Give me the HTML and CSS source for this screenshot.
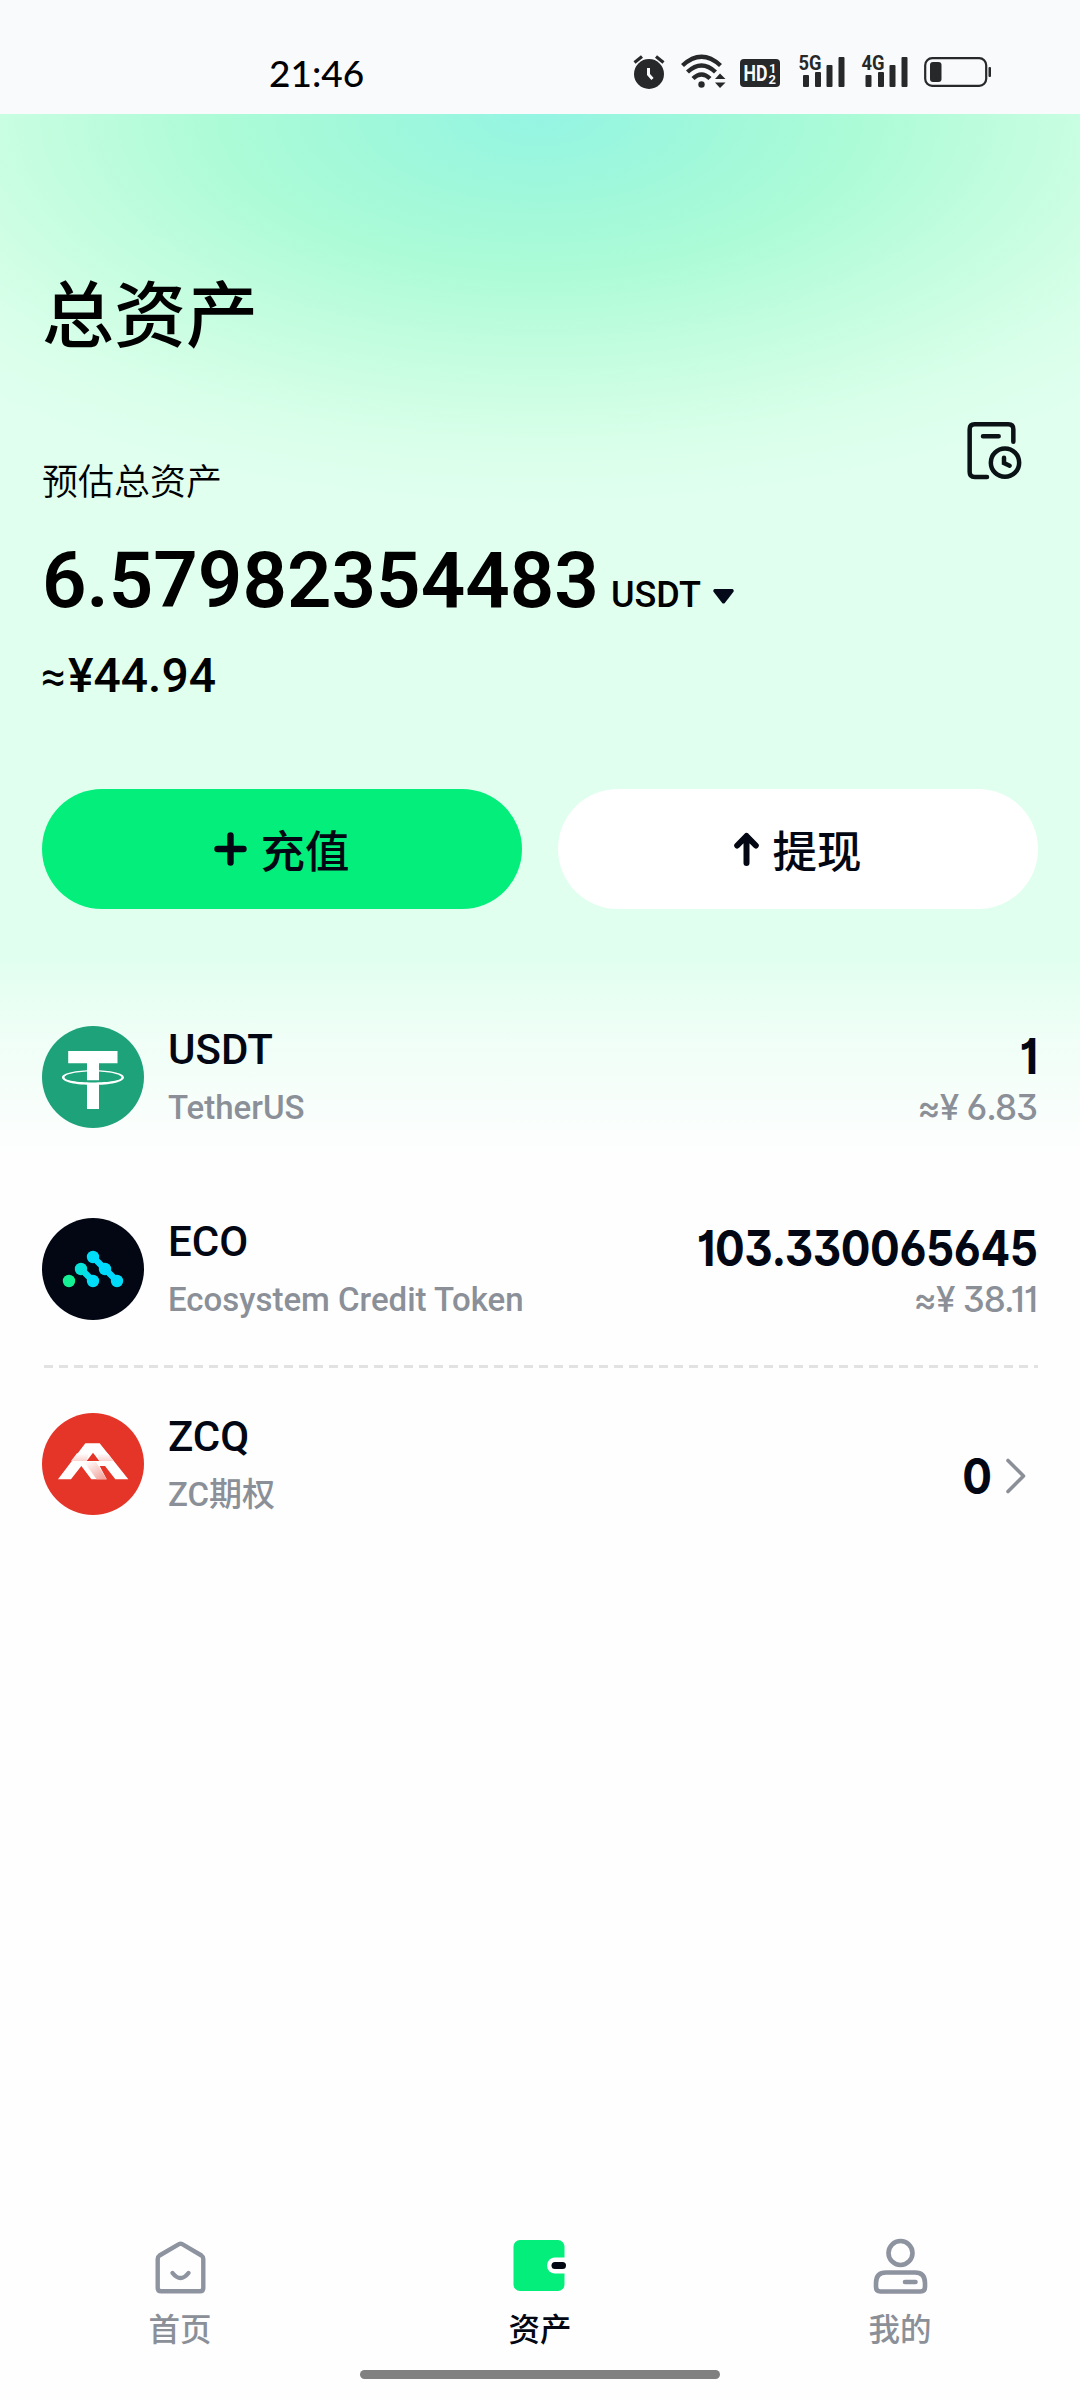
FILE: index.html
```html
<!DOCTYPE html>
<html lang="zh-CN">
<head>
<meta charset="utf-8">
<title>总资产</title>
<link rel="stylesheet" href="styles.css">
</head>
<body>
<div class="screen">
  <header class="status">
    <span class="clock">21:46</span>
    <svg class="status-icons" width="372" height="40" viewBox="630 52 372 40" fill="#262829">
      <!-- alarm -->
      <circle cx="649" cy="74" r="15"/>
      <path d="M634.500 62.500L642 56.500M663.500 62.500L656 56.500" stroke="#262829" stroke-width="3.200"/>
      <path d="M648.500 68V74.500L652.500 79" stroke="#f9fafc" stroke-width="3" fill="none"/>
      <!-- wifi -->
      <g fill="none" stroke="#262829" stroke-width="4.400">
        <path d="M682.500 65.500Q701.500 48 720.500 65.500"/>
        <path d="M687.500 72Q701.500 59 715.500 72"/>
        <path d="M693 78.500Q701.500 70.500 710 78.500"/>
      </g>
      <circle cx="701.500" cy="84.500" r="3.200"/>
      <path d="M715 79L720 73.500L725.500 79ZM715 82.500L720 88L725.500 82.500Z"/>
      <!-- hd -->
      <rect x="740" y="59" width="40" height="28" rx="4"/>
      <text class="hd" x="743.500" y="81" textLength="24" lengthAdjust="spacingAndGlyphs">HD</text>
      <text class="hd-sub" x="769" y="73">1</text>
      <text class="hd-sub" x="768.500" y="83.500">2</text>
      <!-- 5G signal -->
      <text class="net" x="798.500" y="70" textLength="23" lengthAdjust="spacingAndGlyphs">5G</text>
      <rect x="803" y="75" width="6" height="12" rx="1"/><rect x="815" y="72" width="6" height="15" rx="1"/><rect x="826.500" y="65" width="6" height="22" rx="1"/><rect x="838.500" y="57" width="6" height="30" rx="1"/>
      <!-- 4G signal -->
      <text class="net" x="861.500" y="70" textLength="23" lengthAdjust="spacingAndGlyphs">4G</text>
      <rect x="865.500" y="75" width="6" height="12" rx="1"/><rect x="878" y="72" width="6" height="15" rx="1"/><rect x="889.500" y="65" width="6" height="22" rx="1"/><rect x="901.500" y="57" width="6" height="30" rx="1"/>
      <!-- battery -->
      <rect x="925.200" y="58.200" width="61" height="27.600" rx="7" fill="none" stroke="#262829" stroke-width="2.200"/>
      <rect x="930" y="62" width="11.500" height="20" rx="3"/>
      <rect x="988.500" y="67" width="2.500" height="10" rx="1"/>
    </svg>
  </header>

  <main class="content">
    <h1 class="title">总资产</h1>
    <div class="summary">
      <span class="summary-label">预估总资产</span>
      <svg class="history" width="55" height="58" viewBox="81 65 165 174" fill="none" stroke="#0a1216" stroke-width="13.500" stroke-linecap="round">
        <path d="M141 230H104Q89 230 89 215V87Q89 72 104 72H205Q220 72 220 87V124M129 108H176"/>
        <circle cx="195" cy="187" r="42.500"/>
        <path d="M192 172V188L209 196"/>
      </svg>
    </div>
    <div class="amount">
      <span class="amount-value">6.57982354483</span>
      <span class="amount-unit">USDT</span>
      <svg class="caret" width="21" height="15" viewBox="0 0 21 15"><path d="M1.500 0H19.500Q21.500 1 20.300 3L11.800 14Q10.500 15.200 9.200 14L.7 3Q-.5 1 1.500 0Z" fill="#04091a"/></svg>
    </div>
    <div class="fiat"><span class="approx">≈</span>¥44.94</div>

    <div class="actions">
      <button class="btn btn-primary">
        <svg width="33" height="34" viewBox="0 0 33 34" stroke="#020713" stroke-width="6.400" stroke-linecap="round"><path d="M3.500 17H29.500M16.500 3.500V30.500"/></svg>
        充值
      </button>
      <button class="btn btn-light">
        <svg width="25" height="34" viewBox="0 0 25 34" fill="none" stroke="#020713" stroke-width="6" stroke-linecap="round" stroke-linejoin="round"><path d="M12.500 31V5M3.200 13.500L12.500 4L21.800 13.500"/></svg>
        提现
      </button>
    </div>

    <section class="assets">
      <article class="asset">
        <svg class="coin" viewBox="0 0 102 102">
          <circle cx="51" cy="51" r="51" fill="#1da27a"/>
          <path fill="#fff" d="M26.200 25H75.500V37.300H57V54.300H45V37.300H26.200ZM45 57.500H57V83H45Z"/>
          <path fill="#fff" fill-rule="evenodd" d="M20 51.500C20 47 34 44.300 51 44.300S82 47 82 51.500S68 59 51 59S20 56 20 51.500ZM22.500 51.300C22.500 54.500 35 56.500 51 56.500S79.500 54.500 79.500 51.300S67 45.400 51 45.400S22.500 48 22.500 51.300Z"/>
        </svg>
        <div class="names"><div class="symbol">USDT</div><div class="fullname">TetherUS</div></div>
        <div class="figures"><div class="balance">1</div><div class="worth">≈¥ 6.83</div></div>
      </article>
      <article class="asset">
        <svg class="coin" viewBox="0 0 102 102">
          <defs><linearGradient id="eco" x1="27" y1="0" x2="75" y2="0" gradientUnits="userSpaceOnUse"><stop offset="0" stop-color="#14f195"/><stop offset=".12" stop-color="#14f195"/><stop offset=".2" stop-color="#08e4d0"/><stop offset=".5" stop-color="#00dcff"/><stop offset="1" stop-color="#00d8ff"/></linearGradient></defs>
          <circle cx="51" cy="51" r="51" fill="#020713"/>
          <g fill="url(#eco)">
            <circle cx="27" cy="63" r="6.200"/>
          </g>
          <g fill="#00dcf8">
            <circle cx="39" cy="51" r="6.200" fill="#08e2d8"/><circle cx="51" cy="63" r="6.200"/><circle cx="51" cy="39" r="6.200"/><circle cx="63" cy="51" r="6.200"/><circle cx="75" cy="63" r="6.200"/>
          </g>
          <path d="M39 51L51 63M51 39L75 63" stroke="url(#eco)" stroke-width="6.500" fill="none"/>
        </svg>
        <div class="names"><div class="symbol">ECO</div><div class="fullname">Ecosystem Credit Token</div></div>
        <div class="figures"><div class="balance">103.330065645</div><div class="worth">≈¥ 38.11</div></div>
      </article>
      <div class="divider"></div>
      <article class="asset">
        <svg class="coin" viewBox="66 219 306 306">
          <defs>
            <linearGradient id="fold" x1="205" y1="360" x2="245" y2="418" gradientUnits="userSpaceOnUse"><stop offset="0" stop-color="#fff"/><stop offset="1" stop-color="#f3a69f"/></linearGradient>
            <linearGradient id="shade" x1="0" y1="340" x2="0" y2="366" gradientUnits="userSpaceOnUse"><stop offset="0" stop-color="#fff"/><stop offset="1" stop-color="#f9cdc8"/></linearGradient>
          </defs>
          <circle cx="219" cy="372" r="153" fill="#e53529"/>
          <path fill="#fff" d="M196 310H239L325 418H286L255 378L239 378L260 418H214L184 378L153 418H114Z"/>
          <path fill="url(#shade)" d="M171 340H206L200 363H153ZM232 340H263L281 363H238Z"/>
          <path fill="url(#fold)" d="M192 366H228L260 418H230Z"/>
          <path fill="#e53529" d="M219 338L238 363H200Z"/>
        </svg>
        <div class="names"><div class="symbol">ZCQ</div><div class="fullname">ZC期权</div></div>
        <div class="more">
          <span class="balance">0</span>
          <svg width="20" height="36" viewBox="0 0 20 36" fill="none" stroke="#8b9098" stroke-width="3.600" stroke-linecap="round" stroke-linejoin="round"><path d="M2 2.500L17.500 18L2 33.500"/></svg>
        </div>
      </article>
    </section>
  </main>

  <nav class="tabs">
    <a class="tab">
      <svg width="60" height="60" viewBox="150 2236 60 60" fill="none" stroke="#8e93a0" stroke-width="4.400" stroke-linecap="round" stroke-linejoin="round">
        <path d="M179 2244.200Q180.600 2243.300 182.200 2244.200L201.500 2255.500Q203.300 2256.700 203.300 2259V2288Q203.300 2291.300 200 2291.300H161.200Q157.700 2291.300 157.700 2288V2259Q157.700 2256.700 159.500 2255.500Z"/>
        <path d="M172.500 2273Q180.500 2283 188.500 2273"/>
      </svg>
      <span>首页</span>
    </a>
    <a class="tab tab-active">
      <svg width="60" height="60" viewBox="510 2236 60 60">
        <rect x="513.500" y="2240" width="51" height="51" rx="6.500" fill="#03ee7a"/>
        <path d="M568 2257.500H555A8 8 0 0 0 555 2273.500H568Z" fill="#fff"/>
        <rect x="551.500" y="2262" width="14.500" height="7" rx="3.500" fill="#020713"/>
      </svg>
      <span>资产</span>
    </a>
    <a class="tab">
      <svg width="60" height="60" viewBox="870 2236 60 60" fill="none" stroke="#8e93a0" stroke-width="4.600" stroke-linecap="round">
        <circle cx="900.500" cy="2253" r="12"/>
        <path d="M886 2272.500H915Q925 2272.500 925 2283V2287Q925 2291.500 920.500 2291.500H880.500Q876 2291.500 876 2287V2283Q876 2272.500 886 2272.500ZM905 2282H915.500"/>
      </svg>
      <span>我的</span>
    </a>
  </nav>
  <div class="home-bar"></div>
</div>
</body>
</html>
```
FILE: styles.css
```css
* { box-sizing: border-box; margin: 0; padding: 0; }

body {
  width: 1080px;
  background: #fefefe;
  color: #000;
  font-family: Roboto, "Noto Sans CJK SC", sans-serif;
}

svg { display: block; flex: none; }

.screen {
  display: flex;
  flex-direction: column;
  width: 1080px;
  height: 2400px;
  overflow: hidden;
}

/* Status bar */
.status {
  display: flex;
  justify-content: space-between;
  align-items: flex-start;
  height: 114px;
  padding: 52px 78px 0 269px;
  background: #f9fafc;
}

.clock {
  font: 500 37px/42px Lato, sans-serif;
}

.hd { font: 700 22px Roboto, sans-serif; fill: #f9fafc; }
.hd-sub { font: 700 13px Roboto, sans-serif; fill: #f9fafc; }
.net { font: 700 21px Roboto, sans-serif; }

/* Page body */
.content {
  flex: 1;
  padding: 156px 42px 0;
  background:
    linear-gradient(to bottom, rgba(254, 254, 254, 0) 840px, rgba(254, 254, 254, .55) 930px, #fefefe 1045px),
    radial-gradient(ellipse 800px 390px at 540px 0, #94f5e3 0, #a0f8da 22%, #acfbd7 40%, #c3fddf 62%, #d8ffe9 84%, #e0ffef 100%);
}

.title {
  font: 500 72px/80px "Noto Sans CJK SC", sans-serif;
}

.summary {
  display: flex;
  justify-content: space-between;
  align-items: flex-end;
  height: 80px;
  margin-top: 71px;
  padding-right: 16px;
}

.summary-label {
  font: 350 36px/44px "Noto Sans CJK SC", sans-serif;
}

.history { align-self: flex-start; margin-top: 1px; }

.amount {
  display: flex;
  align-items: baseline;
  margin-top: 35px;
  height: 90px;
}

.amount-value { font-weight: 600; font-size: 78px; line-height: 90px; }
.amount-unit { margin-left: 12px; font-weight: 500; font-size: 36px; }
.caret { margin-left: 12px; align-self: flex-start; margin-top: 53px; }

.fiat {
  height: 56px;
  margin-top: 22px;
  font-weight: 500;
  font-size: 48px;
  line-height: 56px;
}

.fiat .approx { display: inline-block; width: 27px; margin-left: -1px; font-size: 44px; line-height: 50px; font-weight: 400; }

.actions {
  display: grid;
  grid-template-columns: 1fr 1fr;
  gap: 36px;
  margin-top: 85px;
}

.btn {
  display: flex;
  align-items: center;
  justify-content: center;
  gap: 13px;
  height: 120px;
  border: 0;
  border-radius: 60px;
  color: #020713;
  font: 500 44.500px/56px "Noto Sans CJK SC", sans-serif;
}

.btn-primary { background: #03ee7a; }
.btn-light { background: #fff; }

/* Asset list */
.assets { margin-top: 117px; }

.asset { display: flex; height: 102px; }
.asset + .asset { margin-top: 90px; }

.coin { width: 102px; height: 102px; }

.names { margin: -1px 0 0 24px; flex: 1; }
.symbol { color: #020713; font-weight: 500; font-size: 42px; line-height: 50px; }
.fullname { margin-top: 13px; color: #8b9098; font-weight: 500; font-size: 33px; line-height: 40px; }

.figures { padding-top: 3px; text-align: right; }

.balance {
  color: #020713;
  font: 700 49px/56px Inter, sans-serif;
  font-feature-settings: "cv01", "cv03", "cv04", "cv09";
  letter-spacing: -.5px;
  transform: scaleX(.9);
  transform-origin: right;
}

.worth {
  margin-top: 2px;
  padding-right: 1px;
  color: #8b9098;
  font: 500 35px/40px Inter, sans-serif;
  font-feature-settings: "cv01", "cv03", "cv04", "cv09";
  letter-spacing: -1px;
}

.more {
  display: flex;
  align-items: flex-start;
  gap: 14px;
  padding: 36px 12px 0 0;
}

.more svg { margin-top: 9px; }

.divider {
  height: 3px;
  margin: 45px 0 45px 2px;
  background: repeating-linear-gradient(to right, #e2e2e2 0 9px, transparent 9px 15px);
}

/* Bottom navigation */
.tabs {
  display: grid;
  grid-template-columns: repeat(3, 1fr);
  height: 134px;
}

.tab {
  display: flex;
  flex-direction: column;
  align-items: center;
  gap: 11px;
  color: #8b9098;
  font: 500 31.500px/40px "Noto Sans CJK SC", sans-serif;
}

.tab-active { color: #020713; }

.home-bar {
  width: 360px;
  height: 9px;
  margin: 0 auto 21px;
  border-radius: 5px;
  background: #808080;
}
```
